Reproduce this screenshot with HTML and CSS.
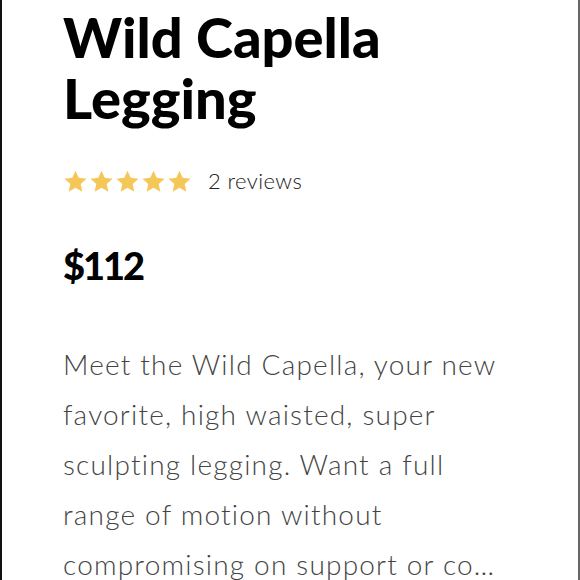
FILE: index.html
```html
<!DOCTYPE html>
<html lang="en">
<head>
<meta charset="utf-8">
<title>Wild Capella Legging</title>
<link rel="stylesheet" href="styles.css">
</head>
<body>
<main class="frame">
  <section class="product">
    <h1 class="title">Wild Capella<br>Legging</h1>
    <div class="rating">
      <div class="stars" aria-label="5 out of 5 stars">
        <svg class="star" viewBox="0 0 24 24"><path d="M12 1.6l3.1 6.9 7.5.8-5.6 5.1 1.6 7.4L12 18l-6.6 3.8 1.6-7.4-5.6-5.1 7.5-.8z"/></svg>
        <svg class="star" viewBox="0 0 24 24"><path d="M12 1.6l3.1 6.9 7.5.8-5.6 5.1 1.6 7.4L12 18l-6.6 3.8 1.6-7.4-5.6-5.1 7.5-.8z"/></svg>
        <svg class="star" viewBox="0 0 24 24"><path d="M12 1.6l3.1 6.9 7.5.8-5.6 5.1 1.6 7.4L12 18l-6.6 3.8 1.6-7.4-5.6-5.1 7.5-.8z"/></svg>
        <svg class="star" viewBox="0 0 24 24"><path d="M12 1.6l3.1 6.9 7.5.8-5.6 5.1 1.6 7.4L12 18l-6.6 3.8 1.6-7.4-5.6-5.1 7.5-.8z"/></svg>
        <svg class="star" viewBox="0 0 24 24"><path d="M12 1.6l3.1 6.9 7.5.8-5.6 5.1 1.6 7.4L12 18l-6.6 3.8 1.6-7.4-5.6-5.1 7.5-.8z"/></svg>
      </div>
      <span class="reviews">2 reviews</span>
    </div>
    <p class="price">$112</p>
    <p class="description">Meet the Wild Capella, your new<br>favorite, high waisted, super<br>sculpting legging. Want a full<br>range of motion without<br>compromising on support or co…</p>
  </section>
</main>
</body>
</html>
```
FILE: styles.css
```css
html, body {
  margin: 0;
  padding: 0;
  background: #ffffff;
}

.frame {
  box-sizing: border-box;
  width: 580px;
  height: 580px;
  overflow: hidden;
  border-left: 2px solid #111111;
  border-right: 2px solid #666666;
  background: #ffffff;
}

.product {
  padding: 0 0 0 61px;
  font-family: "Lato", "Liberation Sans", sans-serif;
  color: #000000;
}

.title {
  margin: 0;
  padding-top: 6px;
  font-size: 56px;
  line-height: 61px;
  font-weight: 900;
  letter-spacing: 0;
}

.rating {
  display: flex;
  align-items: center;
  gap: 16px;
  margin-top: 40px;
}

.stars {
  display: flex;
  gap: 1px;
}

.star {
  width: 25px;
  height: 25px;
  fill: #f5c658;
}

.reviews {
  font-size: 22px;
  line-height: 26px;
  font-weight: 300;
  letter-spacing: 0.4px;
  color: #222222;
}

.price {
  margin: 47px 0 0;
  font-size: 38px;
  line-height: 48px;
  font-weight: 900;
  letter-spacing: -2px;
}

.description {
  margin: 50px 0 0;
  font-size: 28px;
  line-height: 50px;
  font-weight: 300;
  letter-spacing: 1.2px;
  color: #444444;
  white-space: nowrap;
}
```
